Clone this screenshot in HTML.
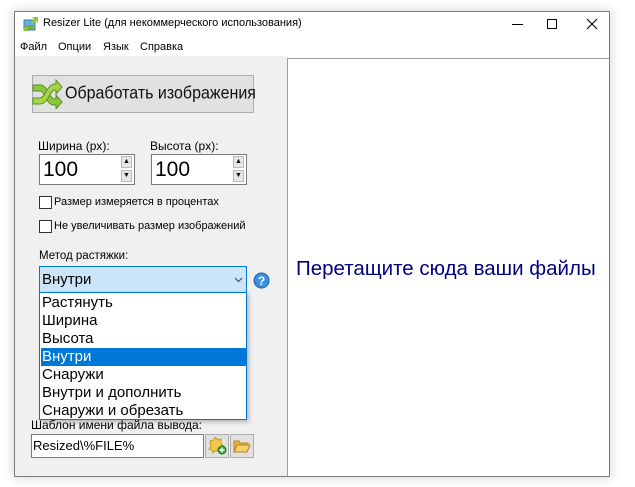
<!DOCTYPE html>
<html><head><meta charset="utf-8"><style>
*{margin:0;padding:0;box-sizing:border-box}
body{width:635px;height:487px;background:#fff;position:relative;overflow:hidden;font-family:"Liberation Sans","DejaVu Sans",sans-serif;font-size:12px;color:#000}
.a{position:absolute;white-space:nowrap}
#win{position:absolute;left:14px;top:11px;width:596px;height:466px;border:1px solid #7a7a7a;background:#fff;box-shadow:0 0 12px rgba(0,0,0,.18)}
.spin{position:absolute;height:31px;width:96px;border:1px solid #7a7a7a;background:#fff}
.spin span{position:absolute;left:3px;top:3px;font-size:21px}
.sb{position:absolute;right:2px;width:11px;height:12px;background:#e5e5e5;border:1px solid #bbb;font-size:7px;text-align:center;line-height:10px}
.cb{position:absolute;width:13px;height:13px;border:1px solid #333;background:#fff}
.it{position:absolute;left:1px;width:205px;height:18px;font-size:15px;line-height:18px;padding-left:1px}
.m{position:absolute;top:41px;font-size:11px}
</style></head><body>
<div id="win"></div>
<svg class="a" style="left:23px;top:16px" width="16" height="16" viewBox="0 0 16 16"><rect x="1" y="4" width="11" height="10" fill="#6ab0e0" stroke="#3a78b0"/><rect x="3" y="9" width="7" height="4" fill="#6cb040"/><path d="M9 1h6v6l-2-2-3 3-2-2 3-3z" fill="#8cc63f"/><path d="M1 15v-4l1.5 1.5 2-2 1.5 1.5-2 2L5.5 15z" fill="#8cc63f"/></svg>
<div class="a" style="left:43px;top:17px;font-size:11px">Resizer Lite (для некоммерческого использования)</div>
<div class="a" style="left:512px;top:24px;width:11px;height:1px;background:#000"></div>
<div class="a" style="left:547px;top:19px;width:10px;height:10px;border:1px solid #000"></div>
<svg class="a" style="left:586px;top:18px" width="12" height="12"><path d="M1 1L11 11M11 1L1 11" stroke="#000" stroke-width="1.1"/></svg>
<div class="m" style="left:20px">Файл</div><div class="m" style="left:58px">Опции</div><div class="m" style="left:103px">Язык</div><div class="m" style="left:140px">Справка</div>
<div class="a" style="left:15px;top:56px;width:273px;height:420px;background:#f0f0f0"></div>
<div class="a" style="left:287px;top:58px;width:322px;height:418px;background:#fff;border-top:1px solid #a0a0a0;border-left:1px solid #a0a0a0"></div>
<div class="a" style="left:296px;top:257px;font-size:20.5px;color:#000080">Перетащите сюда ваши файлы</div>
<div class="a" style="left:32px;top:75px;width:222px;height:38px;background:#e1e1e1;border:1px solid #adadad"></div>
<svg class="a" style="left:31px;top:79px" width="32" height="30" viewBox="0 0 32 30"><path d="M2 6h8c6 0 8 14 14 14h1v-4l6 7-6 7v-4h-2c-8 0-9-14-14-14H2z" fill="#8cc63f" stroke="#5d8f1e" stroke-width="1"/><path d="M2 19h7c5 0 7-14 15-14h1V1l6 7-6 7v-4h-1c-5 0-7 14-15 14H2z" fill="#a4d64a" stroke="#5d8f1e" stroke-width="1"/></svg>
<div class="a" style="left:65px;top:84px;font-size:16px;transform:scaleY(1.12);transform-origin:left top;color:#111">Обработать изображения</div>
<div class="a" style="left:38px;top:139px">Ширина (px):</div>
<div class="a" style="left:150px;top:139px">Высота (px):</div>
<div class="spin" style="left:39px;top:154px"><span>100</span><div class="sb" style="top:1px">▲</div><div class="sb" style="top:15px">▼</div></div>
<div class="spin" style="left:151px;top:154px"><span>100</span><div class="sb" style="top:1px">▲</div><div class="sb" style="top:15px">▼</div></div>
<div class="cb" style="left:39px;top:196px"></div>
<div class="a" style="left:54px;top:196px;font-size:11px">Размер измеряется в процентах</div>
<div class="cb" style="left:39px;top:220px"></div>
<div class="a" style="left:54px;top:220px;font-size:11px">Не увеличивать размер изображений</div>
<div class="a" style="left:39px;top:250px;font-size:11.5px">Метод растяжки:</div>
<div class="a" style="left:39px;top:266px;width:208px;height:27px;background:#cce4f7;border:1px solid #0078d7"></div>
<div class="a" style="left:42px;top:271px;font-size:15px">Внутри</div>
<svg class="a" style="left:234px;top:277px" width="9" height="6"><path d="M1 1l3.5 3.5L8 1" fill="none" stroke="#444"/></svg>
<svg class="a" style="left:253px;top:272px" width="17" height="17"><circle cx="8.5" cy="8.5" r="7.5" fill="#3d8fe0" stroke="#1f5fa8"/><text x="8.5" y="13" font-size="12" font-weight="bold" fill="#fff" text-anchor="middle" font-family="Liberation Sans">?</text></svg>
<div class="a" style="left:39px;top:292px;width:208px;height:128px;background:#fff;border:1px solid #0078d7;box-shadow:2px 2px 4px rgba(0,0,0,.25)">
<div class="it" style="top:1px">Растянуть</div>
<div class="it" style="top:19px">Ширина</div>
<div class="it" style="top:37px">Высота</div>
<div class="it" style="top:55px;background:#0078d7;color:#fff">Внутри</div>
<div class="it" style="top:73px">Снаружи</div>
<div class="it" style="top:91px">Внутри и дополнить</div>
<div class="it" style="top:109px">Снаружи и обрезать</div>
</div>
<div class="a" style="left:31px;top:418px;font-size:12px">Шаблон имени файла вывода:</div>
<div class="a" style="left:31px;top:434px;width:173px;height:24px;background:#fff;border:1px solid #7a7a7a"></div>
<div class="a" style="left:33px;top:438px;font-size:13px">Resized\%FILE%</div>
<div class="a" style="left:205px;top:434px;width:24px;height:24px;background:#e1e1e1;border:1px solid #adadad"></div>
<svg class="a" style="left:207px;top:437px" width="20" height="18"><path d="M3 4l4-1 1-3 3 3 3-1v5l3 2-3 3v2H8l-2 2-1-3-3-1 2-3z" fill="#f2c94c" stroke="#c89a20"/><circle cx="15" cy="13" r="4" fill="#3aa83a" stroke="#1c6f1c"/><path d="M15 10.5v5M12.5 13h5" stroke="#fff" stroke-width="1.4"/></svg>
<div class="a" style="left:230px;top:434px;width:24px;height:24px;background:#e1e1e1;border:1px solid #adadad"></div>
<svg class="a" style="left:233px;top:439px" width="18" height="14"><path d="M1 2h5l1 2h8v2H4L1 13z" fill="#e8b040" stroke="#b88020"/><path d="M4 6h13l-3 7H1z" fill="#f6d070" stroke="#b88020"/></svg>
</body></html>
